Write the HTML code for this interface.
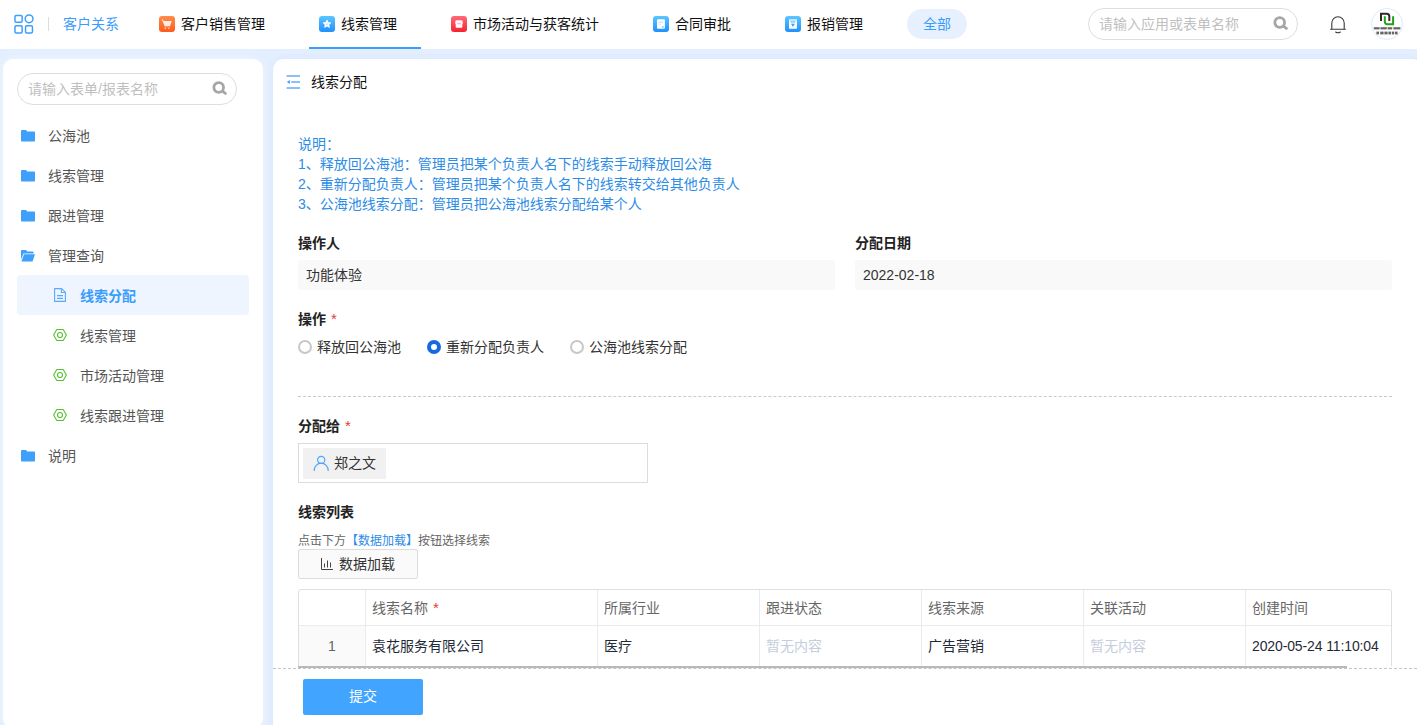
<!DOCTYPE html>
<html lang="zh-CN">
<head>
<meta charset="utf-8">
<title>线索分配</title>
<style>
*{box-sizing:border-box;margin:0;padding:0}
html,body{width:1417px;height:725px;overflow:hidden}
body{background:#e3eefe;font-family:"Liberation Sans","Noto Sans CJK SC",sans-serif;font-size:14px;color:#333;position:relative}
.abs{position:absolute}
/* header */
#hd{position:absolute;left:0;top:0;width:1417px;height:49px;background:#fff}
#hd .grid{position:absolute;left:14px;top:14px;width:20px;height:20px}
#hd .sep{position:absolute;left:48px;top:17px;width:1px;height:14px;background:#ddd}
#hd .app{position:absolute;left:63px;top:0;height:48px;line-height:48px;color:#3a9dfb;font-size:14px;white-space:nowrap}
.tab{position:absolute;top:0;height:49px;line-height:48px;white-space:nowrap;color:#111;font-size:14px}
.tab .ti{position:absolute;top:16px;width:16px;height:16px;display:block}
.tab span{position:absolute;top:0}
.tab.on{border-bottom:2px solid #3a9dfb}
.pill{position:absolute;left:907px;top:9px;width:60px;height:30px;border-radius:15px;background:#e6f0ff;color:#3a9dfb;text-align:center;line-height:30px;font-size:14px}
.srch{position:absolute;border:1px solid #dedede;border-radius:16px;background:#fff;height:32px;color:#bfbfbf;font-size:14px;line-height:30px;padding-left:10px;white-space:nowrap}
.srch svg{position:absolute;width:17px;height:17px}
/* sidebar */
#sb{position:absolute;left:3px;top:59px;width:260px;height:669px;background:#fff;border-left:1px solid #fff;border-radius:10px;box-shadow:0 0 8px rgba(255,255,255,.5)}
.mi{position:absolute;left:0;width:259px;height:40px;line-height:40px;color:#555;font-size:14px;white-space:nowrap}
.mi svg{position:absolute}
.mi span{position:absolute;top:0}
.mi.l1 svg{left:17px;top:13px;width:14px;height:14px}
.mi.l1 span{left:44px}
.mi.l2 svg{left:49px;top:13px;width:14px;height:14px}
.mi.l2 span{left:76px}
.mi.act{left:13px;width:232px;background:#eef5ff;border-radius:4px;color:#3a9dfb;font-weight:bold}
.mi.act svg{left:36px}
.mi.act span{left:63px}
/* main */
#mn{position:absolute;left:273px;top:59px;width:1149px;height:680px;background:#fff;border-radius:10px 10px 0 0;box-shadow:0 0 5px rgba(210,228,253,.8)}
.t{position:absolute;white-space:nowrap;line-height:20px;height:20px}
.lbl{font-weight:bold;color:#222}
.req{color:#e23c39;font-weight:normal;margin-left:1px;font-size:15px}
.inp{position:absolute;height:30px;background:#f9f9f9;border-radius:2px;line-height:30px;padding-left:8px;color:#333}
.radio{position:absolute;width:14px;height:14px;border-radius:50%;border:2px solid #c8c8c8;background:#fff}
.radio.on{border:4px solid #1769de}
.dash{position:absolute;height:0;border-top:1px dashed #c4cad6}
.vl{position:absolute;top:0;width:1px;height:90px;background:#ebebee}
.th{top:8px;color:#666}
.td{top:46px;color:#1f2a37}
</style>
</head>
<body>
<div id="hd">
  <svg class="grid" viewBox="0 0 20 20" fill="none" stroke="#3d9ffd" stroke-width="1.5">
    <rect x="0.95" y="1.4" width="7.2" height="6.8" rx="1.2"/>
    <circle cx="15.1" cy="4.8" r="3.9"/>
    <rect x="0.95" y="11.75" width="7.2" height="7.2" rx="1.2"/>
    <rect x="11.55" y="11.75" width="6.9" height="7.2" rx="1.2"/>
  </svg>
  <div class="sep"></div>
  <div class="app">客户关系</div>

  <div class="tab" style="left:149px;width:140px"><svg class="ti" style="left:10px" viewBox="0 0 16 16"><defs><linearGradient id="g1" x1="0" y1="0" x2="0" y2="1"><stop offset="0" stop-color="#ff8d4d"/><stop offset="1" stop-color="#ff5a1c"/></linearGradient></defs><rect width="16" height="16" rx="3" fill="url(#g1)"/><g fill="#fff" fill-opacity="0.880"><path d="M2.700 3.300 L4 3.500 L4.500 5.100 H12.700 L11.100 9.900 H5.600 Z"/><path d="M5.200 10.500 H11 V11.200 H5.200 Z" fill-opacity="0.550"/><circle cx="6.300" cy="12.200" r="0.750" fill-opacity="0.750"/><circle cx="9.900" cy="12.200" r="0.750" fill-opacity="0.750"/></g></svg><span style="left:32px">客户销售管理</span></div>
  <div class="tab on" style="left:309px;width:112px"><svg class="ti" style="left:10px" viewBox="0 0 16 16"><defs><linearGradient id="g2" x1="0" y1="0" x2="0" y2="1"><stop offset="0" stop-color="#5cc6ff"/><stop offset="1" stop-color="#1f90ff"/></linearGradient></defs><rect width="16" height="16" rx="3" fill="url(#g2)"/><path d="M8 3.900 L9.150 6.450 L11.900 6.800 L9.900 8.700 L10.400 11.400 L8 10.100 L5.600 11.400 L6.100 8.700 L4.100 6.800 L6.850 6.450 Z" fill="#fff" stroke="#fff" stroke-width="0.700" stroke-linejoin="round"/><circle cx="8" cy="8.100" r="0.900" fill="#a8d9ff"/></svg><span style="left:32px">线索管理</span></div>
  <div class="tab" style="left:441px;width:182px"><svg class="ti" style="left:10px" viewBox="0 0 16 16"><defs><linearGradient id="g3" x1="0" y1="0" x2="0" y2="1"><stop offset="0" stop-color="#ff6b79"/><stop offset="1" stop-color="#f6222f"/></linearGradient></defs><rect width="16" height="16" rx="3" fill="url(#g3)"/><path d="M4.800 4.200 H11.200 L12 7 a1 1 0 0 1 -1 1 H5 a1 1 0 0 1 -1 -1 Z" fill="#fff" fill-opacity="0.920"/><rect x="4.700" y="7.600" width="6.600" height="4.200" rx="0.800" fill="#fff"/><rect x="6.400" y="7.300" width="3.200" height="1" fill="#ff8f97"/></svg><span style="left:32px">市场活动与获客统计</span></div>
  <div class="tab" style="left:643px;width:112px"><svg class="ti" style="left:10px" viewBox="0 0 16 16"><defs><linearGradient id="g4" x1="0" y1="0" x2="0" y2="1"><stop offset="0" stop-color="#5cc6ff"/><stop offset="1" stop-color="#1f90ff"/></linearGradient></defs><rect width="16" height="16" rx="3" fill="url(#g4)"/><rect x="4" y="3.300" width="7.900" height="9.500" rx="1" fill="#fff"/><rect x="5.300" y="5.700" width="4.700" height="1" fill="#b9e0ff"/><rect x="5.300" y="7.700" width="2.700" height="1" fill="#cfe9ff"/><rect x="9" y="10.400" width="1.800" height="1.200" fill="#6fbcff"/></svg><span style="left:32px">合同审批</span></div>
  <div class="tab" style="left:775px;width:112px"><svg class="ti" style="left:10px" viewBox="0 0 16 16"><defs><linearGradient id="g5" x1="0" y1="0" x2="0" y2="1"><stop offset="0" stop-color="#5cc6ff"/><stop offset="1" stop-color="#1f90ff"/></linearGradient></defs><rect width="16" height="16" rx="3" fill="url(#g5)"/><rect x="4" y="3.300" width="7.900" height="9.500" rx="0.600" fill="#fff"/><rect x="4" y="3.300" width="7.900" height="1.200" fill="#bfe4ff"/><path d="M4.600 4.500 H11.300 L9.600 6.900 H6.300 Z" fill="#9ad4ff"/><path d="M5.900 7.700 H10 L7.950 11 Z" fill="#3fa6ff"/></svg><span style="left:32px">报销管理</span></div>
  <div class="pill">全部</div>
  <div class="srch" style="left:1088px;top:8px;width:210px">请输入应用或表单名称
    <svg style="left:183px;top:6px" viewBox="0 0 17 17"><circle cx="7.700" cy="7.500" r="4.850" fill="none" stroke="#a6a6a6" stroke-width="2.800"/><path d="M11.600 11.400 L14.400 13.400" stroke="#a6a6a6" stroke-width="2.800" stroke-linecap="round"/></svg>
  </div>
  <svg class="abs" style="left:1329px;top:14px;width:18px;height:22px" viewBox="0 0 18 22" fill="none" stroke="#3a3a3a" stroke-width="1.1">
    <path d="M2.800 15.300 V9 a6.200 6.200 0 0 1 12.400 0 V15.300"/><path d="M1.600 15.300 H16.400" stroke-linecap="round"/><path d="M6.600 18 Q9 19.500 11.400 18" stroke-linecap="round"/>
  </svg>
  <svg class="abs" style="left:1371px;top:8px;width:32px;height:32px" viewBox="0 0 32 32">
    <circle cx="16" cy="16" r="15.500" fill="#fff" stroke="#dce9fe" stroke-width="1"/>
    <path d="M10 13 V5.800 H15.800 a2.500 2.500 0 0 1 2.500 2.500 V13" fill="none" stroke="#2e2a2b" stroke-width="2"/>
    <path d="M13.800 8.200 V13.700 a2.500 2.500 0 0 0 2.500 2.500 H22.100 V8.200" fill="none" stroke="#23a01a" stroke-width="2"/>
    <g fill="#2b2b2b" fill-opacity="0.720">
      <rect x="2.800" y="19.200" width="5.800" height="2.200"/><rect x="9.400" y="19.200" width="6.400" height="2.200"/><rect x="16.600" y="19.200" width="4.600" height="2.200"/><rect x="22.400" y="19.200" width="7" height="2.200"/>
      <rect x="5.400" y="23.600" width="2.600" height="2.800"/><rect x="9.200" y="23.600" width="3.400" height="2.800"/><rect x="13.400" y="23.600" width="3.200" height="2.800"/><rect x="17.400" y="23.600" width="2.800" height="2.800"/><rect x="21" y="23.600" width="2.200" height="2.800"/><rect x="24" y="23.600" width="2.600" height="2.800"/>
    </g>
  </svg>
</div>

<div id="sb">
  <div class="srch" style="left:13px;top:14px;width:220px">请输入表单/报表名称
    <svg style="left:193px;top:6px" viewBox="0 0 17 17"><circle cx="7.700" cy="7.500" r="4.850" fill="none" stroke="#a6a6a6" stroke-width="2.800"/><path d="M11.600 11.400 L14.400 13.400" stroke="#a6a6a6" stroke-width="2.800" stroke-linecap="round"/></svg>
  </div>
  <div class="mi l1" style="top:57px"><svg viewBox="0 0 14 14"><path d="M0 1.8 a0.8 0.8 0 0 1 0.8-0.8 H5 l1.2 1.600 H13.200 a0.800 0.800 0 0 1 0.800 0.800 V11.700 a0.800 0.800 0 0 1 -0.800 0.800 H0.800 a0.800 0.800 0 0 1 -0.800 -0.800 Z" fill="#3fa0fc"/></svg><span>公海池</span></div>
  <div class="mi l1" style="top:97px"><svg viewBox="0 0 14 14"><path d="M0 1.8 a0.8 0.8 0 0 1 0.8-0.8 H5 l1.2 1.600 H13.200 a0.800 0.800 0 0 1 0.800 0.800 V11.700 a0.800 0.800 0 0 1 -0.800 0.800 H0.800 a0.800 0.800 0 0 1 -0.800 -0.800 Z" fill="#3fa0fc"/></svg><span>线索管理</span></div>
  <div class="mi l1" style="top:137px"><svg viewBox="0 0 14 14"><path d="M0 1.8 a0.8 0.8 0 0 1 0.8-0.8 H5 l1.2 1.600 H13.200 a0.800 0.800 0 0 1 0.800 0.800 V11.700 a0.800 0.800 0 0 1 -0.800 0.800 H0.800 a0.800 0.800 0 0 1 -0.800 -0.800 Z" fill="#3fa0fc"/></svg><span>跟进管理</span></div>
  <div class="mi l1" style="top:177px"><svg viewBox="0 0 14 14"><path d="M0 1.800 a0.800 0.800 0 0 1 0.800 -0.800 H5 l1.200 1.600 H11.800 a0.800 0.800 0 0 1 0.800 0.800 V4.400 H2.600 L0 10.500 Z" fill="#3fa0fc"/><path d="M3 5.200 H14 L11.600 12.500 H0.400 Z" fill="#3fa0fc"/></svg><span>管理查询</span></div>
  <div class="mi act l2" style="top:216px;line-height:42px"><svg viewBox="0 0 14 14" fill="none" stroke="#5aa9fb" stroke-width="1.100"><path d="M1.600 0.600 H8.600 L12.400 4.300 V13.400 H1.600 Z" stroke-linejoin="round"/><path d="M8.400 0.800 V4.500 H12.200"/><path d="M4 7.600 H10 M4 10.400 H10"/></svg><span>线索分配</span></div>
  <div class="mi l2" style="top:257px"><svg viewBox="0 0 14 14" fill="none" stroke="#55c22e" stroke-width="1.100"><path d="M3.800 0.550 H10.200 L13.400 6 L10.200 11.450 H3.800 L0.600 6 Z" stroke-linejoin="round"/><circle cx="7" cy="6" r="2.500"/></svg><span>线索管理</span></div>
  <div class="mi l2" style="top:297px"><svg viewBox="0 0 14 14" fill="none" stroke="#55c22e" stroke-width="1.100"><path d="M3.800 0.550 H10.200 L13.400 6 L10.200 11.450 H3.800 L0.600 6 Z" stroke-linejoin="round"/><circle cx="7" cy="6" r="2.500"/></svg><span>市场活动管理</span></div>
  <div class="mi l2" style="top:337px"><svg viewBox="0 0 14 14" fill="none" stroke="#55c22e" stroke-width="1.100"><path d="M3.800 0.550 H10.200 L13.400 6 L10.200 11.450 H3.800 L0.600 6 Z" stroke-linejoin="round"/><circle cx="7" cy="6" r="2.500"/></svg><span>线索跟进管理</span></div>
  <div class="mi l1" style="top:377px"><svg viewBox="0 0 14 14"><path d="M0 1.8 a0.8 0.8 0 0 1 0.8-0.8 H5 l1.2 1.600 H13.200 a0.800 0.800 0 0 1 0.800 0.800 V11.700 a0.800 0.800 0 0 1 -0.800 0.800 H0.800 a0.800 0.800 0 0 1 -0.800 -0.800 Z" fill="#3fa0fc"/></svg><span>说明</span></div>
</div>

<div id="mn">
  <svg class="abs" style="left:13px;top:16px;width:15px;height:15px;overflow:visible" viewBox="0 0 15 15" fill="none" stroke="#8dbdff" stroke-width="1.900"><path d="M0.600 1.050 H14 M5.200 7 H14 M0.600 12.950 H14"/><path d="M3.900 5 L0.900 7 L3.900 9 Z" fill="#3fa2ff" stroke="none"/></svg>
  <div class="t" style="left:38px;top:13px;color:#111">线索分配</div>

  <div class="t" style="left:25px;top:75px;color:#2d8ce6">说明：</div>
  <div class="t" style="left:25px;top:95px;color:#2d8ce6">1、释放回公海池：管理员把某个负责人名下的线索手动释放回公海</div>
  <div class="t" style="left:25px;top:115px;color:#2d8ce6">2、重新分配负责人：管理员把某个负责人名下的线索转交给其他负责人</div>
  <div class="t" style="left:25px;top:135px;color:#2d8ce6">3、公海池线索分配：管理员把公海池线索分配给某个人</div>

  <div class="t lbl" style="left:25px;top:174px">操作人</div>
  <div class="inp" style="left:25px;top:201px;width:537px">功能体验</div>
  <div class="t lbl" style="left:582px;top:174px">分配日期</div>
  <div class="inp" style="left:582px;top:201px;width:537px">2022-02-18</div>

  <div class="t lbl" style="left:25px;top:250px">操作 <span class="req">*</span></div>
  <div class="radio" style="left:25px;top:281px"></div>
  <div class="t" style="left:44px;top:278px">释放回公海池</div>
  <div class="radio on" style="left:154px;top:281px"></div>
  <div class="t" style="left:173px;top:278px">重新分配负责人</div>
  <div class="radio" style="left:297px;top:281px"></div>
  <div class="t" style="left:316px;top:278px">公海池线索分配</div>

  <div class="dash" style="left:25px;top:337px;width:1094px"></div>

  <div class="t lbl" style="left:25px;top:357px">分配给 <span class="req">*</span></div>
  <div class="abs" style="left:25px;top:384px;width:350px;height:40px;border:1px solid #dcdcdc;background:#fff">
    <div class="abs" style="left:4px;top:4px;width:83px;height:31px;background:#f1f1f1;border-radius:1px">
      <svg class="abs" style="left:10px;top:6.600px;width:16px;height:16px" viewBox="0 0 16 16" fill="none" stroke="#4da6ff" stroke-width="1.200"><circle cx="8.200" cy="4.900" r="3.600"/><path d="M1.200 15.600 a7 7.400 0 0 1 14 0" stroke-linecap="round"/></svg>
      <div class="t" style="left:31px;top:5px">郑之文</div>
    </div>
  </div>

  <div class="t lbl" style="left:25px;top:443px">线索列表</div>
  <div class="t" style="left:25px;top:471.500px;font-size:12px;color:#666">点击下方<span style="color:#2d8ce6">【数据加载】</span>按钮选择线索</div>
  <div class="abs" style="left:25px;top:490px;width:120px;height:30px;border:1px solid #dcdcdc;border-radius:2px;background:#fafafa">
    <svg class="abs" style="left:21px;top:7px;width:14px;height:14px" viewBox="0 0 14 14" fill="none" stroke="#444" stroke-width="1"><path d="M1.500 1 V12.500 H13"/><path d="M4.500 6.500 V10.500 M7.500 3.500 V10.500 M10.500 5.500 V10.500"/></svg>
    <div class="t" style="left:40px;top:4px">数据加载</div>
  </div>

  <div class="abs" id="tb" style="left:25px;top:530px;width:1094px;height:90px;border:1px solid #dcdfe6;border-radius:3px 3px 0 0;overflow:hidden">
    <div class="abs" style="left:0;top:36px;width:66px;height:60px;background:#fafafa"></div>
    <div class="vl" style="left:66px"></div>
    <div class="abs" style="left:0;top:35px;width:1094px;height:1px;background:#ebebee"></div>
        <div class="vl" style="left:298px"></div><div class="vl" style="left:460px"></div><div class="vl" style="left:622px"></div><div class="vl" style="left:784px"></div><div class="vl" style="left:946px"></div>
    <div class="t th" style="left:73px">线索名称 <span class="req">*</span></div>
    <div class="t th" style="left:305px">所属行业</div>
    <div class="t th" style="left:467px">跟进状态</div>
    <div class="t th" style="left:629px">线索来源</div>
    <div class="t th" style="left:791px">关联活动</div>
    <div class="t th" style="left:953px">创建时间</div>
    <div class="t td" style="left:0;width:66px;text-align:center;color:#666">1</div>
    <div class="t td" style="left:73px">袁花服务有限公司</div>
    <div class="t td" style="left:305px">医疗</div>
    <div class="t td" style="left:467px;color:#c6cddc">暂无内容</div>
    <div class="t td" style="left:629px">广告营销</div>
    <div class="t td" style="left:791px;color:#c6cddc">暂无内容</div>
    <div class="t td" style="left:953px;letter-spacing:-0.12px">2020-05-24 11:10:04</div>
  </div>
  <div class="abs" style="left:0;top:607px;width:1144px;height:80px;background:#fff"></div>
  <div class="abs" style="left:25px;top:607px;width:1049px;height:2px;background:#b9b9b9"></div>
  <div class="dash" style="left:0;top:609px;width:1144px;border-top-color:#c4c4c4"></div>
  <div class="abs" style="left:30px;top:620px;width:120px;height:36px;background:#41a4ff;border-radius:2px;color:#fff;text-align:center;line-height:34px;font-size:14px">提交</div>
</div>
</body>
</html>
